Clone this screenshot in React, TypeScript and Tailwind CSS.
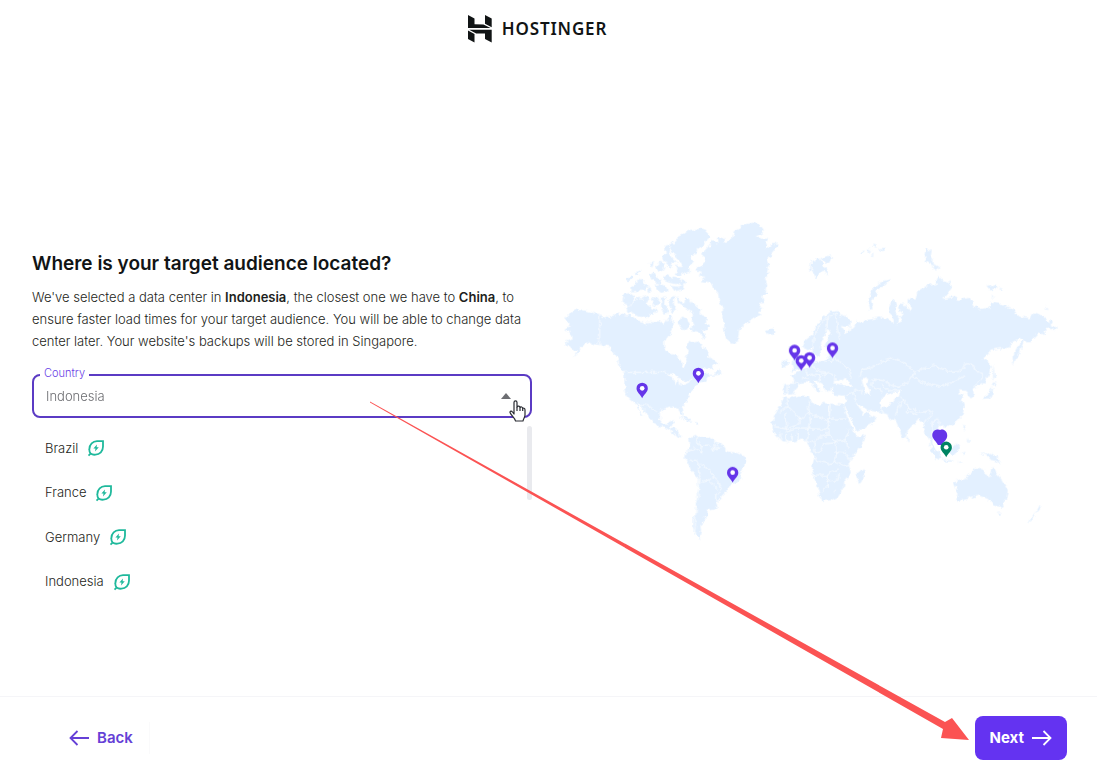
import React, { useState } from 'react';

const countries = ['Brazil', 'France', 'Germany', 'Indonesia'];

const westLand = [
  // north america
  'M28 310L40 292 65 280 82 284 100 288 130 295 150 305 160 300 170 304 185 292 205 298 222 298 240 312 262 318 270 328 274 318 300 320 320 318 324 328 335 310 350 315 352 340 342 355 325 378 326 398 340 412 362 420 375 430 378 450 388 458 396 440 390 425 396 408 390 392 400 375 415 380 430 378 440 395 450 400 462 420 470 430 485 440 470 455 445 458 432 466 450 470 462 478 480 474 495 472 490 478 462 480 455 490 448 498 430 500 415 515 402 530 396 545 392 560 378 572 384 590 383 602 376 594 370 578 350 572 335 578 320 578 312 592 312 612 322 626 335 628 340 618 354 614 348 628 344 636 358 642 370 644 368 660 378 668 368 668 356 656 342 645 325 636 306 630 288 620 280 604 270 590 258 574 246 565 250 582 266 602 256 596 244 576 236 560 218 545 208 530 205 510 206 480 204 470 190 450 188 435 172 408 160 395 130 388 110 385 100 378 85 388 72 405 50 425 62 405 45 402 32 388 30 378 48 372 50 362 35 352 42 346 25 340 32 334 45 332 36 322z',
  // greenland
  'M418 162L440 148 450 138 442 125 440 110 455 95 470 75 485 82 484 66 500 65 512 78 528 72 535 45 548 42 560 25 595 20 612 28 625 45 618 52 600 62 620 68 640 68 632 82 625 97 642 92 655 80 668 84 660 100 648 115 635 130 642 145 632 158 640 170 628 190 635 205 630 220 636 235 620 240 625 262 608 262 620 280 605 288 618 296 600 304 580 318 562 330 550 345 548 365 538 387 522 380 512 372 505 340 506 320 500 305 502 280 490 262 488 235 472 218 468 205 450 200 435 198 448 182 425 176 440 168z',
  // ellesmere and axel heiberg
  'M322 122L330 112 328 90 350 82 362 66 382 56 400 42 430 38 450 44 463 64 448 76 440 92 425 100 420 114 400 118 405 130 412 138 400 152 402 168 386 172 370 180 356 174 366 162 360 150 378 150 374 136 360 122 346 108 342 92 338 108 352 128 366 140 350 142 345 156 332 146z',
  'M300 150l14-16 10 8-4 20-12 6zM282 142l14-4-8 18zM212 190l16-10 6 8-20 14zM236 170l22-8-10 14zM224 210l16-8 14-16 12 4-4 16 16 4-6 12-18-4-10 10-20 2zM280 176l12-8 10 16 14 6-2 14-14-4-14-10zM322 182l12-8 14 10 24 4 16 10-4 8-28-2-16-4-16-6zM300 208l14-4 16 8 6 12-20 4-14-10zM345 210l20 2 22-6-2 14-28 6zM278 214l10 2 2 14-12-4z',
  // victoria and neighbours
  'M204 236l14-4 16 6 6 6-12 16-10 10-14-6-4-14zM218 272l14-14 14-12 14 2 12-8 6 14-10 6 14 10 10 8 12 2-6 12-14 4-8 14-18-6-12-2-16-10-14-4-6-10zM288 244l14-6 8 10-4 24-12-4zM316 246l14-2-2 20 10 20-14 10-8-16z',
  // baffin
  'M338 244l18-4-2 24 10 20-14 8-10-22zM362 248l8-6 4 18 12-2 4-18 10 10 2 12 16 2 6 12 14 4-4 14 10 8 8 12-2 10 12 10-10 6-12 2 6 16 6 10-12-4-14-16-14-2-6-10 10-8-8-14 4-20-14-12-18-10-12-6zM366 320l14-18 14 8 6 18-6 14-20-4zM334 296l12 2 4 14-12 2z',
  'M628 346l12-6 14-2 6 8-12 10-14 2zM480 468l10-6 4 10-14 4zM372 604l18 4 18 8-10 2-22-8zM416 620l12 2 2 6-14-2z',
  // south america
  'M400 668L410 660 420 658 426 664 440 662 460 665 478 678 496 682 505 692 515 708 530 710 550 715 572 728 574 738 562 758 556 770 552 790 540 802 525 806 518 818 514 830 502 840 495 852 480 860 486 872 474 882 456 886 455 900 444 910 446 920 434 930 436 945 430 965 440 976 420 962 412 940 414 910 420 880 424 845 428 815 430 790 418 778 405 762 396 742 385 726 388 708 398 700 403 685z',
];

const eastLand = [
  // eurasia
  'M112 395L118 375 138 358 150 332 170 308 195 288 215 286 222 296 242 302 258 316 258 330 240 334 226 330 240 352 250 346 252 334 264 338 272 326 276 316 288 322 305 312 330 308 350 302 372 312 386 326 378 300 372 275 385 250 392 266 390 290 402 304 398 325 412 318 404 300 412 292 398 280 402 266 420 268 434 286 440 278 430 262 430 246 450 252 456 226 480 212 510 205 518 180 534 194 556 200 560 216 532 250 566 244 582 252 612 246 626 270 642 280 672 276 680 260 702 264 722 272 740 276 752 290 762 302 796 308 802 292 832 300 848 314 860 320 862 334 878 334 866 346 850 338 836 342 840 358 820 350 806 364 798 376 776 376 766 404 752 430 745 450 742 424 754 398 776 368 756 374 738 384 730 396 702 398 680 402 656 430 668 436 680 450 674 476 656 502 638 512 622 520 628 540 618 548 608 540 604 526 582 524 584 536 600 540 590 552 596 572 592 596 574 618 556 626 542 634 522 630 514 642 528 652 536 664 532 676 516 686 508 668 500 666 502 694 516 712 524 734 512 728 502 706 494 676 480 652 474 628 458 610 448 622 426 646 422 664 413 668 404 646 394 622 386 608 372 612 366 596 346 590 320 586 310 588 300 578 286 572 272 558 284 578 296 598 302 586 312 600 334 606 326 622 300 636 272 646 262 622 246 592 236 568 242 552 240 540 222 540 205 536 198 522 205 514 192 516 194 530 182 526 172 508 152 494 142 494 152 510 168 524 158 528 146 514 134 500 120 500 108 502 92 520 84 536 62 538 54 534 56 505 84 504 86 490 76 478 92 472 108 460 124 456 138 442 134 430 140 422 150 438 175 436 190 424 192 404 204 400 196 392 182 402 178 388 186 370 196 352 188 340 180 352 166 378 168 400 156 424 146 418 140 396 128 404z',
  'M72 395l14-6 10 10-2 18 12 22 4 16-14 8-22 4 8-12-4-14 8-8-12-14zM52 436l12-6 6 10-8 14-14 2z',
  // svalbard, franz josef, novaya zemlya
  'M136 132l12 6 4-10 14 0 4 18 14 12 4 18-16-12-10 12-8 16-8-16-12-14zM168 128l16-8 16 4-6 14-18 2zM284 108l14-4-4 10zM304 100l14 4-10 6zM322 94l10-8 2 12zM340 98l22-2-10 10zM312 118l14-4-4 6z',
  'M374 190l-10 14-20 10-12 20-12 14 4 30-10 4-6-16 4-28 8-16 18-20 20-8zM476 124l6-26 14 2-2 22 10 16 4 14-16-10-14-8zM508 144l18 12-16 12zM664 210l20-4 14 8-22 10zM702 216l14 2-6 6zM680 240l8 4-6 4zM836 276l12-2 2 6zM684 445l6 40-6 10zM680 504l12 2-10 6z',
  // japan and south east asia
  'M652 546l14-8 10-14 8-10-2 20-8 14-18 2zM684 500l12 2-8 10-8-2zM594 626l6 8-4 12zM422 664l8 8-4 8zM492 684l16 12 20 24 4 14-14-10-18-22zM560 696l14-14 8 14-8 18-14 4-8-10zM590 708l8-2-4 14zM610 664l4 10-6 6zM532 730l20 4 12 4-20 0zM576 738l16 2-10 2zM640 708l20 8 16-4 14 8 20 24-18-8-14-2-12-14-22-8z',
  // africa
  'M55 545L72 548 95 540 130 540 134 558 160 570 172 562 192 564 236 568 240 590 256 628 270 662 282 664 300 658 296 680 278 706 262 724 250 744 256 772 236 796 236 816 218 844 198 854 170 856 160 830 146 784 140 754 146 724 134 700 125 688 130 680 112 672 95 676 70 680 46 676 22 648 20 622 26 602 40 576z',
  'M294 758l3 12-8 28-10 12-6-16 6-24z',
  // oceania
  'M566 802L580 794 602 786 618 770 634 758 656 758 654 774 674 786 684 754 694 774 704 786 728 824 724 850 706 874 684 870 668 850 640 840 612 850 576 856 580 836zM696 892l12 0-6 12zM822 872l8 6-10 12-8 4zM812 892l-8 16-14 14 4-12z',
];

const eastLakes = [
  'M202 506L212 490 228 494 236 486 250 498 266 512 240 512 222 508z',
  'M288 492L302 484 312 490 304 506 314 522 312 538 298 532 294 512z',
  'M345 552L366 536 388 530 406 524 400 540 386 552 376 570 346 576z',
];

const westBorders = [
  'M131 295V388L145 395M205 470H328L350 480',
  'M246 565L275 570 290 578 300 592M342 645L346 628',
  'M426 664L422 680 440 690 438 712 420 700 400 706 388 708M440 690L458 688 470 700 478 678M470 700L496 698M484 682L486 698M405 730L420 736 430 745 428 765 434 790 430 815 426 850 420 900 418 950M434 745L462 765 474 785 488 800 496 820 480 840 480 860M440 800L462 795 474 785M462 800L486 820',
];

const eastBorders = [
  'M142 396L146 360 165 325 190 300 210 295 216 340 222 370M186 305L184 345M180 415L205 420 200 440 178 438M205 420L225 440 255 465 256 490M120 458L126 480 145 475 165 480 190 470 210 480 205 500M140 442L150 465 180 470M84 504L108 508M68 506L66 538M110 488L130 490M165 480L160 498',
  'M285 482L290 462 320 455 345 440 382 428 415 442 450 465 440 480 425 500 400 515 380 508 355 495 325 490 318 508 350 530M455 466L500 450 530 460 560 470 590 466 600 445 620 442 638 470 655 478 630 512M440 480L470 500 520 514 550 504 600 480',
  'M240 540L262 528 275 522 290 532M262 528L272 558M345 575L350 590M405 540L412 552 400 575 390 600M412 552L430 576 465 590 495 586 500 600 482 615 474 628M430 576L426 588 460 598M500 620L515 612 530 626M500 620L500 666M345 505L370 525 405 524',
  'M62 548L66 570 40 590M66 570L105 612M60 590L64 640 24 632M105 612L130 590 128 560M130 590L190 618 192 564M190 618L194 568M192 610H244M105 612L90 630 64 640M60 650L90 640 130 640 186 640 190 618M130 640L135 620 130 590M45 650V676M62 655V680M80 655V676M95 648V676M130 640L125 675 145 680 160 665 188 660 186 640M188 660L210 680 240 672 250 640M145 680L148 712 165 705 175 685 210 682 212 710 210 740 190 745 165 740 146 730M212 710L240 712 255 735M240 672L248 700M210 740L230 752 256 745M146 782L185 780 200 770 220 760M185 780L185 815 170 830M185 800L215 795 222 775M205 830l8-8',
];

const pins = [
  { x: 259, y: 548 },
  { x: 428, y: 503 },
  { x: 531, y: 801 },
  { x: 717, y: 434 },
  { x: 762, y: 456 },
  { x: 737, y: 465 },
  { x: 831, y: 427 },
];

const LeafIcon: React.FC = () => (
  <svg viewBox="0 0 18 18" className="w-[18px] h-[18px]" fill="none" aria-hidden="true">
    <path
      d="M3.6 14.6A6.8 6.8 0 0 1 2.3 10.4C2.3 5.2 6 2.2 10 2.1H16V7.600C16 12.600 12.700 15.600 8.500 15.600A6.600 6.600 0 0 1 3.600 14.600L1.500 16.600"
      stroke="#1fb99c"
      strokeWidth="1.8"
    />
    <path d="M10 5.400L6.400 9.600H8.500L8 12.600 11.800 8.300H9.600z" fill="#1fb99c" />
  </svg>
);

const WorldMap: React.FC = () => (
  <svg viewBox="0 0 1530 990" className="w-full" role="img" aria-label="Data center locations">
    <filter id="coast" x="0" y="0" width="100%" height="100%">
      <feTurbulence type="fractalNoise" baseFrequency="0.06" numOctaves="3" seed="4" />
      <feDisplacementMap in="SourceGraphic" scale="18" xChannelSelector="R" yChannelSelector="G" />
    </filter>
    <g filter="url(#coast)" fill="#e3f0ff">
      {westLand.map((d) => (
        <path key={d} d={d} />
      ))}
      {/* great lakes */}
      <path d="M335 478L352 472 368 480 364 488 378 492 392 498 400 492 408 486 400 500 384 508 370 504 366 492 356 506 352 486z" fill="#fff" />
      <g transform="translate(630 0)">
        {eastLand.map((d) => (
          <path key={d} d={d} />
        ))}
        {eastLakes.map((d) => (
          <path key={d} d={d} fill="#fff" />
        ))}
      </g>
      <g fill="none" stroke="#fafdff" strokeWidth="3">
        {westBorders.map((d) => (
          <path key={d} d={d} />
        ))}
        <g transform="translate(630 0)">
          {eastBorders.map((d) => (
            <path key={d} d={d} />
          ))}
        </g>
      </g>
    </g>
    {pins.map((pin) => (
      <g key={pin.x} transform={`translate(${pin.x} ${pin.y})`}>
        <path d="M0 0C-6-12-17-18-17-30a17 17 0 0 1 34 0C17-18 6-12 0 0z" fill="#6535e9" />
        <circle cy="-30" r="7" fill="#fff" />
      </g>
    ))}
    <path d="M1148 688C1142 676 1131 670 1131 658a17 17 0 0 1 24-15c10-4 21 4 21 17 0 12-10 18-16 28z" fill="#6535e9" />
    <path d="M1173 725C1167 713 1156 707 1156 695a17 17 0 0 1 34 0C1190 707 1179 713 1173 725z" fill="#008361" />
    <circle cx="1173" cy="695" r="7" fill="#fff" />
  </svg>
);

const App: React.FC = () => {
  const [country, setCountry] = useState('Indonesia');

  return (
    <div className="relative min-h-screen flex flex-col overflow-hidden bg-white text-[#1d1e20] font-['Inter',sans-serif]">
      <header className="flex h-[58px] items-center justify-center gap-[10px] pr-[22px]">
        <svg viewBox="0 0 24 28" className="w-6 h-7" fill="#111415" aria-hidden="true">
          <path d="M0 0L6.500 3.500V9.300L15.500 9.400 22.500 13H0zM17 0L23.700 3.500V12.200L17 8.700z" />
          <path d="M0 15.500L6.500 19V27.500L0 24zM1.200 14.800H23.700V27.500L17 24V18.500L8.200 18.400z" />
        </svg>
        <span className="font-['Noto_Sans',sans-serif] text-[17px] leading-6 font-semibold tracking-wider text-[#111415]">HOSTINGER</span>
      </header>

      <main className="flex-1 grid grid-cols-[500px_1fr] items-center gap-6 px-8">
        <section className="pt-[100px]">
          <h1 className="text-[19px] leading-7 font-semibold text-[#111415]">
            Where is your target audience located?
          </h1>
          <p className="mt-2 text-[13px] leading-[22px] font-light">
            We've selected a data center in <strong className="font-semibold">Indonesia</strong>, the closest one we have to{' '}
            <strong className="font-semibold">China</strong>, to ensure faster load times for your target audience. You will be able to change data
            center later. Your website's backups will be stored in Singapore.
          </p>

          <div className="relative mt-[22px]">
            <label htmlFor="country" className="absolute left-2 -top-[9px] px-1 bg-white text-[11px] leading-4 font-light text-[#673de6]">
              Country
            </label>
            <input
              id="country"
              type="text"
              role="combobox"
              aria-expanded="true"
              aria-controls="country-list"
              value={country}
              onChange={(e) => setCountry(e.target.value)}
              className="block w-full h-11 px-3 text-[13px] font-light text-[#6d6e72] border-2 border-[#5b3bc4] rounded-lg outline-none"
            />
            <svg viewBox="0 0 10 6" className="absolute right-[21px] top-[19px] w-[10px] h-[6px]" fill="#6d6e72" aria-hidden="true">
              <path d="M5 0L10 6H0z" />
            </svg>
            <svg viewBox="0 0 17 22" className="absolute right-[6px] top-[26px] w-[17px] h-[22px]" fill="#fff" stroke="#292b32" strokeWidth="1.200" strokeLinejoin="round" aria-hidden="true">
              <path d="M5 12V2.500C5 .3 8 .3 8 2.500V7C9 5.500 11 6 11 7.500 12 6.500 13.500 7 13.700 8.300 15 7.700 16 8.500 16 10V15C16 17.500 14.500 18 14 21H6.500C6 18 2 15.500 1 12.500.8 11 2.500 10.500 3.500 12L5 14z" />
              <path d="M8 7v4M11 7.500v3.500M13.700 8.300V11" />
            </svg>
          </div>

          <div className="mt-2 flex items-start justify-between">
            <ul id="country-list" className="grid grid-rows-4 h-[178px]">
              {countries.map((name) => (
                <li key={name} className="flex">
                  <button type="button" onClick={() => setCountry(name)} className="flex items-center gap-[9px] px-[13px] text-[13px] font-light">
                    {name}
                    <LeafIcon />
                  </button>
                </li>
              ))}
            </ul>
            <div className="w-[5px] h-[74px] rounded-full bg-[#e9eaee]" />
          </div>
        </section>

        <div className="pt-2">
          <WorldMap />
        </div>
      </main>

      <footer className="flex h-[79px] items-center justify-between border-t border-[#f5f5f8] pl-[53px] pr-[30px] pt-1">
        <button type="button" className="flex h-8 items-center gap-2 px-4 text-[15px] font-semibold text-[#6540d6] border-r border-[#fafafb]">
          <svg viewBox="0 0 20 16" className="w-5 h-4" fill="none" stroke="currentColor" strokeWidth="1.800" aria-hidden="true">
            <path d="M20 8H1M8.500 1L1.500 8 8.500 15" />
          </svg>
          Back
        </button>
        <button type="button" className="flex h-11 items-center gap-2 px-[15px] rounded-lg bg-[#6433f1] text-[15px] font-bold text-white">
          Next
          <svg viewBox="0 0 20 16" className="w-5 h-4" fill="none" stroke="currentColor" strokeWidth="1.800" aria-hidden="true">
            <path d="M0 8H19M11.500 1L18.500 8 11.500 15" />
          </svg>
        </button>
      </footer>

      {/* pointer arrow towards the next button */}
      <svg viewBox="0 0 600 340" className="absolute left-[370px] top-[401px] w-[600px] h-[340px] pointer-events-none" fill="#fb5353" aria-hidden="true">
        <path d="M0 .5L575 321 582 317 599 339 571 337 573 328 0 1.500z" />
      </svg>
    </div>
  );
};

export default App;
